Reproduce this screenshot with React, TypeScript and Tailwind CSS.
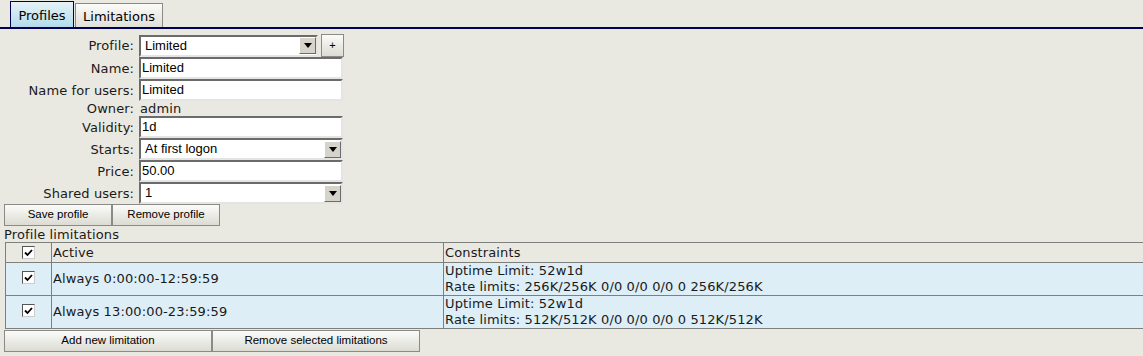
import React from "react";

const label = "text-right text-[13px] leading-[15px] text-[#1a1a1a] pr-[5px] tracking-[0.1px]";
const inputCls =
  "h-[22px] w-[204px] bg-white border-2 border-t-[#6b6b6b] border-l-[#6b6b6b] border-b-[#e4e4e4] border-r-[#e4e4e4] px-[1px] flex items-center text-[13px] text-black";
const dejavu = { fontFamily: '"DejaVu Sans", Verdana, sans-serif' };
const arial = { fontFamily: '"Liberation Sans", Arial, sans-serif' };

function Arrow() {
  return (
    <div className="w-[17px] h-[17px] bg-[#d6d3ca] border border-t-white border-l-white border-b-[#6b6b6b] border-r-[#6b6b6b] flex items-center justify-center">
      <svg width="8" height="5" viewBox="0 0 8 5">
        <path d="M0 0 L8 0 L4 5 Z" fill="#000" />
      </svg>
    </div>
  );
}

function Select({ value, width = "w-[204px]" }: { value: string; width?: string }) {
  return (
    <div
      className={`h-[22px] ${width} bg-white border-2 border-t-[#6b6b6b] border-l-[#6b6b6b] border-b-[#e4e4e4] border-r-[#e4e4e4] flex items-center justify-between pl-[4px] pr-[0px] text-[13px] text-black`}
      style={arial}
    >
      <span>{value}</span>
      <Arrow />
    </div>
  );
}

function Input({ value }: { value: string }) {
  return (
    <div className={inputCls} style={arial}>
      {value}
    </div>
  );
}

function Btn({ children, w }: { children: React.ReactNode; w: string }) {
  return (
    <div
      className={`${w} h-[22px] border border-[#8a8a86] bg-gradient-to-b from-[#fbfbf9] to-[#dcdcd4] flex items-center justify-center text-[11.5px] text-black`}
      style={arial}
    >
      {children}
    </div>
  );
}

function Check() {
  return (
    <div className="w-[13px] h-[13px] bg-white border border-t-[#555] border-l-[#555] border-b-[#ccc] border-r-[#ccc] flex items-center justify-center">
      <svg width="9" height="8" viewBox="0 0 9 8">
        <path d="M1 3.5 L3.5 6 L8 1" stroke="#000" strokeWidth="1.8" fill="none" />
      </svg>
    </div>
  );
}

export default function App() {
  const rows = [
    { name: "Always 0:00:00-12:59:59", rate: "256K/256K 0/0 0/0 0/0 0 256K/256K" },
    { name: "Always 13:00:00-23:59:59", rate: "512K/512K 0/0 0/0 0/0 0 512K/512K" },
  ];
  return (
    <div className="w-[1143px] h-[356px] bg-[#eae9e1] overflow-hidden" style={dejavu}>
      {/* tabs */}
      <div className="h-[29px] border-b-2 border-[#000055] flex items-end pl-[10px]">
        <div className="h-[26px] w-[64px] border border-b-0 border-[#000055] bg-gradient-to-b from-[#e6f2f8] to-[#b3dbeb] flex items-center justify-center pt-[2px] text-[13px] text-black">
          Profiles
        </div>
        <div className="h-[24px] w-[88px] ml-[1px] border border-b-0 border-[#8a8a86] bg-gradient-to-b from-[#fbfbf9] to-[#e0dfd8] flex items-center justify-center pt-[2px] text-[13px] text-black">
          Limitations
        </div>
      </div>

      {/* form */}
      <div className="mt-[5px] grid grid-cols-[139px_auto] w-max items-center">
        <div className={label}>Profile:</div>
        <div className="flex items-center gap-[3px] h-[23px]">
          <Select value="Limited" width="w-[179px]" />
          <div
            className="w-[23px] h-[23px] border border-[#8a8a86] bg-gradient-to-b from-[#fbfbf9] to-[#dcdcd4] flex items-center justify-center text-[11px] text-black"
            style={arial}
          >
            +
          </div>
        </div>
        <div className={label}>Name:</div>
        <Input value="Limited" />
        <div className={label}>Name for users:</div>
        <Input value="Limited" />
        <div className={label}>Owner:</div>
        <div className="text-[13px] leading-[15px] text-[#1a1a1a] pl-[1px] tracking-[0.1px]">admin</div>
        <div className={label}>Validity:</div>
        <Input value="1d" />
        <div className={label}>Starts:</div>
        <Select value="At first logon" />
        <div className={label}>Price:</div>
        <Input value="50.00" />
        <div className={label}>Shared users:</div>
        <Select value="1" />
      </div>

      <div className="flex pl-[4px]">
        <Btn w="w-[108px]">Save profile</Btn>
        <Btn w="w-[108px]">Remove profile</Btn>
      </div>

      <div className="pl-[4px] text-[13px] leading-[15px] mt-[1px] text-[#1a1a1a] tracking-[0.12px]">Profile limitations</div>

      {/* table */}
      <div className="ml-[5px] border-l border-t border-[#7d807c] text-[13px] text-[#1a1a1a] tracking-[0.13px]">
        <div className="grid grid-cols-[46px_392px_1fr] h-[20px] border-b border-[#7d807c]">
          <div className="flex items-center justify-center border-r border-[#7d807c]">
            <Check />
          </div>
          <div className="flex items-center pl-[1px] border-r border-[#7d807c]">Active</div>
          <div className="flex items-center pl-[1px]">Constraints</div>
        </div>
        {rows.map((r) => (
          <div key={r.name} className="grid grid-cols-[46px_392px_1fr] h-[33px] bg-[#ddeef7] border-b border-[#7d807c]">
            <div className="flex items-center justify-center border-r border-[#7d807c] pb-[3px]">
              <Check />
            </div>
            <div className="flex items-center pl-[1px] border-r border-[#7d807c]">{r.name}</div>
            <div className="flex flex-col justify-center pl-[1px] leading-[16px]">
              <div>Uptime Limit: 52w1d</div>
              <div>Rate limits: {r.rate}</div>
            </div>
          </div>
        ))}
      </div>

      <div className="flex pl-[4px] mt-[1px]">
        <Btn w="w-[208px]">Add new limitation</Btn>
        <Btn w="w-[208px]">Remove selected limitations</Btn>
      </div>
    </div>
  );
}
